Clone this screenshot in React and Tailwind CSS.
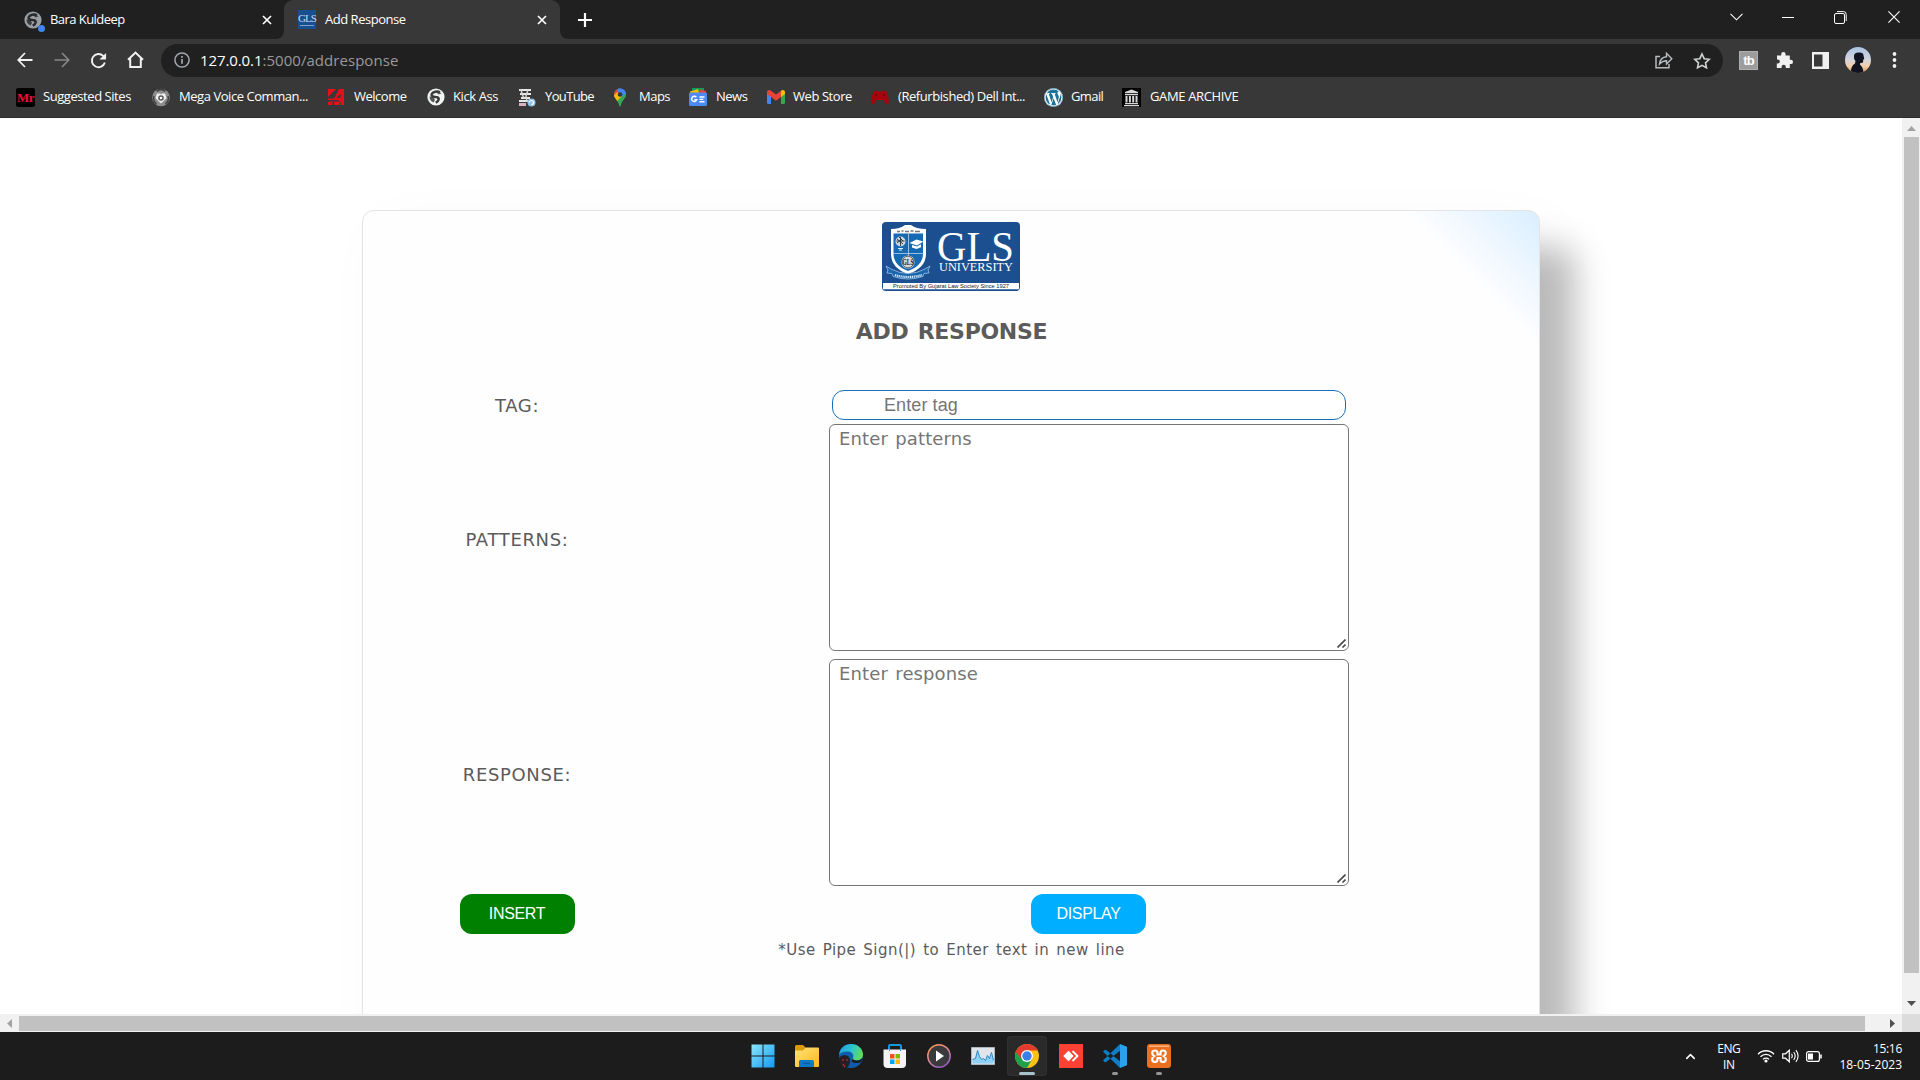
import { ChevronUp } from 'lucide-react'
import { FaWordpress } from 'react-icons/fa'

const Globe = ({ size = 18, land = '#3a3a3a', sea = '#f1f3f4' }) => (
  <svg width={size} height={size} viewBox="0 0 18 18">
    <circle cx="9" cy="9" r="8.600" fill={sea} />
    <path d="M12.800 4.200C10.500 2.600 5.500 3.800 4.600 6.400 4 9 8 8.600 10 9.200c2.600.8 2.200 3.300-1.200 5.600" fill="none" stroke={land} strokeWidth="2.500" />
    <path d="M2.500 8.500l4 .5 1.500 3-1.500 2.500C4 13.500 2.500 11.500 2.500 8.500z" fill={land} opacity=".85" />
    <path d="M9.500 4.500l2-1.500 3 2.500-3 1z" fill={land} opacity=".8" />
  </svg>
)

const MrIcon = () => (
  <span className="flex size-[19px] items-center justify-center rounded-xs bg-black font-['Liberation_Serif',serif] text-[13px] font-bold leading-none tracking-[-0.4px] text-[#f50a3c]">Mr</span>
)
const MegaIcon = () => (
  <svg width="18" height="19" viewBox="0 0 18 19">
    <circle cx="9" cy="9.500" r="8.800" fill="#8d8d8d" />
    <path d="M5 3.500C7 .9 11 .9 13 3.500M2 8c-1 3 0 6 2.500 8M16 8c1 3 0 6-2.500 8" fill="none" stroke="#3c3c3c" strokeWidth="1.400" />
    <path d="M5 5.500h3.200L9 6.500l.8-1H13l1.500 4.500L9 15.500 3.500 10z" fill="#f0f0f0" />
    <circle cx="9" cy="10" r="2.800" fill="#555" />
    <circle cx="9" cy="10" r="1.300" fill="#fff" />
  </svg>
)
const WelcomeIcon = () => (
  <svg width="18" height="18" viewBox="0 0 18 18">
    <path d="M1 1h8L1 9zM11.500 1H17v9h-3V5.500L7 10.500H1V12h10l6 5V11.500z" fill="#e50f1c" />
    <path d="M12 1h5v11H6.500z" fill="#e50f1c" />
    <path d="M1 14l4.500-1v4H1zM7 13.500h6V17H7zM14 13h3v4h-3z" fill="#e50f1c" />
    <path d="M13.500 5.500v4.500H9.500z" fill="#383838" />
  </svg>
)
const YouTubeIcon = () => (
  <svg width="18" height="19" viewBox="0 0 18 19">
    <path d="M1 2h12M2 6h11M3 10h9M1 13h10" stroke="#e9e9e9" strokeWidth="2.200" />
    <path d="M3 1l1 5 2 4M10 2L8 8l1 6" stroke="#d2d2d2" strokeWidth="1.500" fill="none" />
    <path d="M1 15h7v3H1z" fill="#d9b3bf" />
    <circle cx="13.500" cy="14.500" r="4" fill="#8fc1e8" />
    <path d="M11.500 14.500a2 2 0 1 1 2 2" stroke="#fff" strokeWidth="1.200" fill="none" />
  </svg>
)
const MapsIcon = () => (
  <svg width="14" height="19" viewBox="0 0 14 19">
    <defs><clipPath id="pin"><path d="M7 .5a6 6 0 0 1 6 6c0 4-4.200 5.500-5.200 11.300q-.8 1.200-1.600 0C5.200 12 1 10.500 1 6.500a6 6 0 0 1 6-6z" /></clipPath></defs>
    <g clipPath="url(#pin)">
      <path d="M0 0h14v19H0z" fill="#34a853" />
      <path d="M4 0h10v5L7 10z" fill="#4285f4" />
      <path d="M0 0h5l3 3-5 6H0z" fill="#ea4335" />
      <path d="M0 8l4.500-4L9 8l-6 6z" fill="#fbbc04" />
      <path d="M5 0h9v4l-5 2-4-2z" fill="#4285f4" />
    </g>
    <circle cx="7" cy="6.500" r="2.300" fill="#383838" />
  </svg>
)
const NewsIcon = () => (
  <svg width="18" height="18" viewBox="0 0 18 18">
    <path d="M3 0h12v5H3z" fill="#0f9d58" />
    <path d="M1 3.500L9 1l1 4H1z" fill="#fbbc04" />
    <path d="M11 1.500l6 1.500v3h-7z" fill="#ea4335" />
    <rect y="4.500" width="18" height="13.500" rx="1.300" fill="#4c8bf5" />
    <path d="M7.300 9.300A2.600 2.600 0 1 0 7.700 11.800H5.400M10.500 9h5M10.500 11.400h3.800M10.500 13.800h5" stroke="#fff" strokeWidth="1.400" fill="none" />
  </svg>
)
const GmailIcon = () => (
  <svg width="18" height="14" viewBox="0 0 18 14">
    <path d="M0 2v10.500Q0 14 1.500 14H4V5z" fill="#4285f4" />
    <path d="M18 2v10.500q0 1.500-1.500 1.500H14V5z" fill="#34a853" />
    <path d="M14 1.500V7l4-3V2.300C18 .2 15.600-.6 14 .8z" fill="#fbbc04" />
    <path d="M0 2.300C0 .2 2.400-.6 4 .8l5 3.800 5-3.800V7L9 10.700 0 4z" fill="#ea4335" />
  </svg>
)
const PadIcon = () => (
  <svg width="18" height="15" viewBox="0 0 18 15">
    <path d="M3 1.500Q5-.3 7 1.500h4Q13-.3 15 1.500c2 3 3 8 2.800 11-.5 3-3 2.500-5-2.500h-7.600C3.200 15 .7 15.500.2 12.500 0 9.500 1 4.500 3 1.500z" fill="#a5060d" />
    <path d="M4 5h2M5 4v2M12 5h2M13 4v2" stroke="#6f0308" strokeWidth="1" />
  </svg>
)
const WpIcon = () => (
  <span className="flex size-[19px] items-center justify-center rounded-full bg-white text-[#1f7196]"><FaWordpress size={19} /></span>
)
const ArchiveIcon = () => (
  <svg width="19" height="19" viewBox="0 0 19 19">
    <path d="M0 0h19v19H0z" fill="#000" />
    <path d="M9.500 1.500L16 4v1.200H3V4zM3 6h13v1.300H3zM3 15h13v1.200H3zM2 17h15v1.300H2zM3.500 8h2v6.500h-2zM6.900 8h2v6.500h-2zM10.200 8h2v6.500h-2zM13.500 8h2v6.500h-2z" fill="#d8d8d8" />
  </svg>
)

const bookmarks = [
  { w: 'w-[136px]', gap: 'gap-[8px]', t: 'tracking-[-0.44px]', label: 'Suggested Sites', icon: <MrIcon /> },
  { w: 'w-[175px]', gap: 'gap-[9px]', t: 'tracking-[-0.45px]', label: 'Mega Voice Comman...', icon: <MegaIcon /> },
  { w: 'w-[100px]', gap: 'gap-[9px]', t: 'tracking-[-0.5px]', label: 'Welcome', icon: <WelcomeIcon /> },
  { w: 'w-[91px]', gap: 'gap-[8px]', t: 'tracking-[-0.41px]', label: 'Kick Ass', icon: <Globe /> },
  { w: 'w-[95px]', gap: 'gap-[9px]', t: 'tracking-[-0.64px]', label: 'YouTube', icon: <YouTubeIcon /> },
  { w: 'w-[76px]', gap: 'gap-[12px]', t: 'tracking-[-0.5px]', label: 'Maps', icon: <MapsIcon /> },
  { w: 'w-[78px]', gap: 'gap-[9px]', t: 'tracking-[-0.5px]', label: 'News', icon: <NewsIcon /> },
  { w: 'w-[104px]', gap: 'gap-[8px]', t: 'tracking-[-0.43px]', label: 'Web Store', icon: <GmailIcon /> },
  { w: 'w-[173px]', gap: 'gap-[9px]', t: 'tracking-[-0.43px]', label: '(Refurbished) Dell Int...', icon: <PadIcon /> },
  { w: 'w-[78px]', gap: 'gap-[8px]', t: 'tracking-[-0.6px]', label: 'Gmail', icon: <WpIcon /> },
  { w: 'w-[130px]', gap: 'gap-[9px]', t: 'tracking-[-0.35px]', label: 'GAME ARCHIVE', icon: <ArchiveIcon /> },
]

const X = () => (
  <svg width="10" height="10" viewBox="0 0 10 10"><path d="M1 1l8 8M9 1L1 9" stroke="#fff" strokeWidth="1.700" /></svg>
)

function TabStrip() {
  return (
    <div className="flex h-[39px] items-stretch bg-[#202020]">
      <div className="flex w-[284px] items-center pl-[24px] pr-[12px]">
        <span className="relative h-[18px] w-[18px]">
          <Globe land="#2a2a2a" sea="#9aa0a6" />
          <span className="absolute left-[14px] top-[14px] size-[7px] rounded-full bg-[#3f85f5]" />
        </span>
        <span className="ml-[8px] flex-1 whitespace-nowrap text-[13px] tracking-[-0.55px] text-white">Bara Kuldeep</span>
        <X />
      </div>
      <div className="relative flex w-[276px] items-center rounded-t-[9px] bg-[#383838] pl-[14px] pr-[13px]">
        <svg className="absolute -left-[9px] bottom-0" width="9" height="9"><path d="M9 0v9H0Q9 9 9 0z" fill="#383838" /></svg>
        <svg className="absolute -right-[9px] bottom-0" width="9" height="9"><path d="M0 0v9h9Q0 9 0 0z" fill="#383838" /></svg>
        <span className="flex h-[19px] w-[18px] flex-col items-center justify-center bg-[#174f92] font-['Liberation_Serif',serif] leading-none text-[#c7d8ee]">
          <span className="text-[11px] leading-[10px] tracking-[-1px]">GLS</span>
          <span className="mt-[2px] h-px w-[14px] bg-[#7d9fca]" />
        </span>
        <span className="ml-[9px] flex-1 whitespace-nowrap text-[13px] tracking-[-0.48px] text-white">Add Response</span>
        <X />
      </div>
      <div className="flex items-center pl-[18px]">
        <svg width="14" height="14" viewBox="0 0 14 14"><path d="M7 0v14M0 7h14" stroke="#fff" strokeWidth="2.200" /></svg>
      </div>
      <div className="ml-auto flex items-center pb-[5px]">
        <svg className="mr-[39px]" width="13" height="8" viewBox="0 0 13 8"><path d="M.5.8l6 6 6-6" stroke="#fff" fill="none" strokeWidth="1.100" /></svg>
        <span className="mr-[40px] h-px w-[12px] bg-white" />
        <svg className="mr-[41px]" width="13" height="13" viewBox="0 0 13 13"><rect x=".5" y="2.500" width="10" height="10" rx="1.500" stroke="#fff" fill="none" /><path d="M3 .6h6.500q2.700 0 2.700 2.800V10" stroke="#fff" fill="none" /></svg>
        <svg className="mr-[20px]" width="12" height="12" viewBox="0 0 12 12"><path d="M.4.4l11.200 11.200M11.600.4L.4 11.600" stroke="#fff" strokeWidth="1.100" /></svg>
      </div>
    </div>
  )
}

function Toolbar() {
  return (
    <div className="flex h-[42px] items-center bg-[#383838] pl-[17px]">
      <svg className="mr-[21px]" width="16" height="16" viewBox="0 0 16 16"><path d="M15.500 8H1.500M8 1L1.300 8 8 15" stroke="#f1f1f1" strokeWidth="1.800" fill="none" /></svg>
      <svg className="mr-[20px]" width="16" height="16" viewBox="0 0 16 16"><path d="M.5 8h14M8 1l6.700 7L8 15" stroke="#868686" strokeWidth="1.700" fill="none" /></svg>
      <svg className="mr-[20px]" width="17" height="17" viewBox="0 0 18 18"><path d="M15.700 11A7 7 0 1 1 14 4.200l1.500 1.500" stroke="#f1f1f1" strokeWidth="2" fill="none" /><path d="M17 1v7h-7z" fill="#f1f1f1" /></svg>
      <svg className="mr-[17px]" width="17" height="18" viewBox="0 0 17 18"><path d="M1 8.800L8.500 1.600 16 8.800M3.200 7.500V16h10.600V7.500" stroke="#f1f1f1" strokeWidth="2" fill="none" /></svg>
      <div className="flex h-[33px] w-[1562px] items-center rounded-full bg-[#202020] pl-[13px] pr-[12px] text-[15px]">
        <svg className="mr-[10px]" width="16" height="16" viewBox="0 0 16 16"><circle cx="8" cy="8" r="7.100" stroke="#a5a9ad" strokeWidth="1.500" fill="none" /><path d="M8 7v4.800M8 4v1.700" stroke="#a5a9ad" strokeWidth="1.700" /></svg>
        <span className="tracking-[-0.1px] text-white">127.0.0.1</span>
        <span className="tracking-[0.05px] text-[#9a9a9a]">:5000/addresponse</span>
        <svg className="ml-auto mr-[20px]" width="18" height="17" viewBox="0 0 18 17"><path d="M5 4.500H1v11.300h13V12" stroke="#b9bbbd" strokeWidth="1.500" fill="none" /><path d="M4.500 12C5 7.500 7.500 5 11.500 4.700V1.300L16.800 6.700 11.500 12V8.700C8.500 8.700 6.500 9.700 4.500 12z" stroke="#b9bbbd" strokeWidth="1.400" fill="none" /></svg>
        <svg width="18" height="17" viewBox="0 0 18 17"><path d="M9 2l2.200 4.700 5 .6-3.700 3.500 1 5L9 13.300l-4.500 2.500 1-5L1.800 7.300l5-.6z" stroke="#d0d2d4" strokeWidth="1.600" fill="none" /></svg>
      </div>
      <span className="ml-[16px] flex size-[19px] items-center justify-center border border-[#b0b0b0] bg-[#9c9c9c] font-['Liberation_Sans',sans-serif] text-[13px] font-bold leading-none tracking-[-1px] text-white">tb</span>
      <svg className="ml-[18px]" width="17" height="18" viewBox="0 0 17 18"><path d="M1 4.500h4.200V3.300a2.200 2.200 0 0 1 4.400 0v1.200h4.200v4.200h1a2.200 2.200 0 0 1 0 4.400h-1V17H9.800v-1.200a2.100 2.100 0 0 0-4.200 0V17H.8v-4.400h1a2 2 0 0 0 0-4H1z" fill="#f1f1f1" /></svg>
      <svg className="ml-[19px]" width="17" height="17" viewBox="0 0 17 17"><path fillRule="evenodd" d="M0 0h17v17H0zM2 2.500v12h8.500v-12z" fill="#f1f1f1" /></svg>
      <svg className="ml-[16px]" width="26" height="26" viewBox="0 0 26 26">
        <defs>
          <linearGradient id="sky" x2="0" y2="1"><stop stopColor="#a9c4e6" /><stop offset=".5" stopColor="#d6d4dc" /><stop offset=".75" stopColor="#f4cfa6" /><stop offset="1" stopColor="#c68a5c" /></linearGradient>
          <clipPath id="av"><circle cx="13" cy="13" r="13" /></clipPath>
        </defs>
        <g clipPath="url(#av)"><path d="M0 0h26v26H0z" fill="url(#sky)" /><path d="M9 9q0-3.500 4.500-3.500Q18.500 5 18.500 8.500l.8 3.500-1 .6-.3 3-3 .6v1.500q3 2 3.500 8.300H6q-.5-7 4-9.500l.5-2.500Q8.500 12 9 9z" fill="#111420" /></g>
      </svg>
      <svg className="ml-[21px]" width="5" height="16" viewBox="0 0 5 16"><g fill="#f1f1f1"><circle cx="2.500" cy="2" r="1.900" /><circle cx="2.500" cy="8" r="1.900" /><circle cx="2.500" cy="14" r="1.900" /></g></svg>
    </div>
  )
}

function Bookmarks() {
  return (
    <div className="flex h-[37px] items-center border-b border-[#2b2b2b] bg-[#383838] pb-[4px] pl-[16px]">
      {bookmarks.map((b) => (
        <div key={b.label} className={`flex shrink-0 items-center whitespace-nowrap text-[13px] text-white ${b.w} ${b.gap} ${b.t}`}>
          {b.icon}
          <span>{b.label}</span>
        </div>
      ))}
    </div>
  )
}

const Logo = () => (
  <svg className="rounded-[4px]" width="138" height="69" viewBox="0 0 138 69">
    <path d="M0 0h138v69H0z" fill="#1b4f8f" />
    <path d="M1 61h136v6.300H1z" fill="#fff" />
    <path d="M9 7q9 0 14-4h6q5 4 15 4v25q0 14-18 20Q9 46 9 32z" fill="#fff" />
    <path d="M11.500 11.500h29.500v20q0 12-15 17.500-14.500-5.500-14.500-17.500z" fill="#1669b3" />
    <path d="M26.500 11.500V34M11 31.500h31" stroke="#b9d3ea" strokeWidth=".8" />
    <path d="M15 9.500h3M19.500 9h2M23 9.500h4M28.500 9h3M33 9.500h5" stroke="#777" strokeWidth="1.600" />
    <circle cx="18.500" cy="19.500" r="5" fill="#cfd8de" />
    <path d="M15 17l6 5M15 21l5-4M17 15l4 4M14.500 19h8M18.500 15v9" stroke="#26333d" strokeWidth=".9" />
    <path d="M16 26.500h5M17 28h3" stroke="#dfe9f2" />
    <path d="M27.500 21l7-3.500 7 2-6.500 4zM30 23l5 1.500 4-2.200v3l-4.500 1.700-4.500-1.500z" fill="#fff" />
    <circle cx="26" cy="40" r="6.600" fill="#d7d9da" />
    <circle cx="26" cy="40" r="5.800" fill="none" stroke="#565b60" strokeWidth=".9" />
    <text x="26" y="42.800" textAnchor="middle" fontSize="8" fontWeight="700" textLength="11" lengthAdjust="spacingAndGlyphs" fontFamily="Liberation Serif, serif" fill="#24292e">GLS</text>
    <path d="M4 44l5 3q17 9 34 0l5-3-2 4 1 3-5 .5-1 3q-15 5-30 0l-1-3-5-.5 1-3z" fill="#1a66ad" stroke="#9dc3e6" strokeWidth=".8" />
    <path d="M13 53q13 4 27 0" fill="none" stroke="#dcecfa" strokeWidth="2.200" strokeDasharray="1.200 .7" />
    <text x="55" y="39" fontSize="42" textLength="77" lengthAdjust="spacingAndGlyphs" fontFamily="Liberation Serif, serif" fill="#fff">GLS</text>
    <text x="57" y="49.200" fontSize="12.500" textLength="74" lengthAdjust="spacingAndGlyphs" fontFamily="Liberation Serif, serif" fill="#fff">UNIVERSITY</text>
    <text x="11" y="66" fontSize="5.600" textLength="116" lengthAdjust="spacingAndGlyphs" fontFamily="Liberation Sans, sans-serif" fill="#222">Promoted By Gujarat Law Society Since 1927</text>
  </svg>
)

const label = "text-center text-[18px] leading-[24px] tracking-[0.65px] text-[#5b5b5b] font-['DejaVu_Sans',sans-serif]"
const button = "h-[40px] w-[115px] rounded-[12px] text-[16px] tracking-[-0.35px] text-white font-['Liberation_Sans',sans-serif]"

function Area({ placeholder }) {
  return (
    <div className="relative">
      <textarea
        className="block h-[227px] w-[520px] resize-none rounded-[6px] border border-[#767676] bg-white px-[9px] py-[1px] font-['DejaVu_Sans',sans-serif] text-[18px] leading-[25px] tracking-[0.12px] [word-spacing:1.5px] placeholder:text-[#757575]"
        placeholder={placeholder}
      />
      <svg className="absolute bottom-[3px] right-[3px]" width="9" height="9" viewBox="0 0 9 9"><path d="M.5 8.500l8-8M5.500 8.500l3-3" stroke="#4a4a4a" strokeWidth="1.600" /></svg>
    </div>
  )
}

function Page() {
  return (
    <div className="min-w-0 flex-1 overflow-hidden bg-white pl-[362px] pt-[92px]">
      <div className="flex h-[900px] w-[1178px] flex-col items-center rounded-[12px] border border-[#e4e4e4] bg-[#fefefe] bg-[linear-gradient(225deg,#daeefe_0px,#e6f4ff_35px,#f4f9ff_68px,#fefefe_97px)] pt-[11px] shadow-[35px_38px_34px_rgba(0,0,0,0.26),14px_14px_60px_rgba(0,0,0,0.03)]">
        <Logo />
        <h1 className="mt-[26px] whitespace-nowrap pl-px font-['DejaVu_Sans',sans-serif] text-[22px] font-bold leading-[30px] tracking-[-0.3px] text-[#5b5b5b] [word-spacing:2px]">ADD RESPONSE</h1>
        <div className="mt-[43px] grid w-full grid-cols-[308px_520px] items-center gap-x-[158px]">
          <div className={`pt-[2px] ${label}`}>TAG:</div>
          <div className="flex h-[30px] justify-center">
            <input className="h-[30px] w-[514px] rounded-[12px] border border-[#1a70b8] bg-white pl-[51px] font-['Liberation_Sans',sans-serif] text-[18px] tracking-[0.1px] placeholder:text-[#757575]" placeholder="Enter tag" />
          </div>
          <div className={`mt-[4px] pt-[4px] ${label}`}>PATTERNS:</div>
          <div className="mt-[4px]"><Area placeholder="Enter patterns" /></div>
          <div className={`mt-[8px] pt-[4px] ${label}`}>RESPONSE:</div>
          <div className="mt-[8px]"><Area placeholder="Enter response" /></div>
          <div className="mt-[8px] flex justify-center"><button className={`bg-[#008000] ${button}`}>INSERT</button></div>
          <div className="mt-[8px] flex justify-center pr-px"><button className={`bg-[#00aeff] ${button}`}>DISPLAY</button></div>
        </div>
        <p className="mt-[6px] whitespace-nowrap pl-px font-['DejaVu_Sans',sans-serif] text-[15px] leading-[20px] tracking-[0.46px] text-[#5b5b5b] [word-spacing:1.900px]">*Use Pipe Sign(|) to Enter text in new line</p>
      </div>
    </div>
  )
}

function VBar() {
  return (
    <div className="flex w-[18px] flex-col items-center bg-[#f1f1f1] pl-[2px] pr-px">
      <svg className="mt-[8px]" width="9" height="5"><path d="M0 5L4.500 0 9 5z" fill="#a3a3a3" /></svg>
      <div className="mt-[6px] h-[836px] w-full bg-[#c1c1c1]" />
      <svg className="mt-auto mb-[8px]" width="9" height="5"><path d="M0 0l4.500 5L9 0z" fill="#505050" /></svg>
    </div>
  )
}

function HBar() {
  return (
    <div className="flex h-[18px] bg-[#f1f1f1]">
      <div className="flex w-[1902px] items-center">
        <svg className="ml-[7px] mr-[7px]" width="5" height="9"><path d="M5 0L0 4.500 5 9z" fill="#a3a3a3" /></svg>
        <div className="mt-px h-[15px] w-[1846px] bg-[#c1c1c1]" />
        <svg className="ml-auto mr-[7px]" width="5" height="9"><path d="M0 0l5 4.500L0 9z" fill="#505050" /></svg>
      </div>
      <div className="w-[18px] bg-[#dcdcdc]" />
    </div>
  )
}

const apps = [
  { icon: (
    <svg width="24" height="24" viewBox="0 0 24 24"><defs><linearGradient id="win" x2="1" y2="1" gradientUnits="userSpaceOnUse" gradientTransform="scale(24)"><stop stopColor="#8ee8fb" /><stop offset="1" stopColor="#0e97f5" /></linearGradient></defs><path d="M.5.500h11v11H.5zM12.500.5h11v11h-11zM.5 12.500h11v11H.5zM12.500 12.500h11v11h-11z" fill="url(#win)" /></svg>
  ) },
  { icon: (
    <svg width="24" height="24" viewBox="0 0 24 24"><defs><linearGradient id="fold" x2="1" y2="1"><stop stopColor="#ffe27a" /><stop offset="1" stopColor="#fbb91c" /></linearGradient></defs><path d="M0 2.500Q0 1 1.500 1H8l2.500 2.500L8 8H0z" fill="#dd9a06" /><path d="M0 6.500h8l2.500-3H23q1 0 1 1V22q0 1-1 1H1q-1 0-1-1z" fill="url(#fold)" /><path d="M4 23v-5.500Q4 16 5.500 16h12q1.500 0 1.500 1.500V23z" fill="#0f78c8" /><path d="M8 19.500h7" stroke="#0a5a9e" strokeWidth="1.300" /></svg>
  ) },
  { icon: (
    <svg width="24" height="24" viewBox="0 0 24 24"><defs><linearGradient id="edge" x1="0" y1=".2" x2="1" y2=".5"><stop stopColor="#1f9fe0" /><stop offset=".5" stopColor="#2cc3d2" /><stop offset="1" stopColor="#62dd58" /></linearGradient></defs><circle cx="12" cy="12" r="12" fill="#0e5cad" /><path d="M0 10.500C1 4 6 0 12 0c7 0 12 5 12 10.500 0 4-3.500 6-7 6-2.500 0-4-1-3.500-2 2-2.500.5-6.500-4-7C5.500 7.200 2 8.500 0 10.500z" fill="url(#edge)" /><path d="M14 14.500c0 1.200 1.500 2 3.500 2 2 0 4.500-.5 6-2.500L22 18c-3 1.500-8 1.500-9.500-1z" fill="#1c1c1c" /><path d="M0 14l2-2 4-1 3 1 2 3v4l-2 4-4 1-4-4z" fill="#2a1d24" /><path d="M3 16h2M7 16h2M4 20l2 3" stroke="#c43a33" strokeWidth="1.100" /></svg>
  ) },
  { icon: (
    <svg width="24" height="24" viewBox="0 0 24 24"><path d="M6 8V2q0-1 1-1h10q1 0 1 1v6" stroke="#1798dd" strokeWidth="2" fill="none" /><path d="M.5 5.500h22.500V20q0 4-4 4H4.500q-4 0-4-4z" fill="#f4f4f4" /><path d="M6 5.500h1V7H6zM17 5.500h1V7h-1z" fill="#1798dd" /><path d="M7 10h4.500v4.500H7z" fill="#f25022" /><path d="M12.500 10H17v4.500h-4.500z" fill="#7fba00" /><path d="M7 15.500h4.500V20H7z" fill="#00a4ef" /><path d="M12.500 15.500H17V20h-4.500z" fill="#ffb900" /></svg>
  ) },
  { icon: (
    <svg width="24" height="24" viewBox="0 0 24 24"><defs><linearGradient id="med" x2=".6" y2="1"><stop stopColor="#ff9a3c" /><stop offset=".5" stopColor="#e08a90" /><stop offset="1" stopColor="#9a5fc4" /></linearGradient></defs><circle cx="12" cy="12" r="11.200" fill="#3a3a3c" stroke="url(#med)" strokeWidth="1.500" /><path d="M9 6.500l8 5.500-8 5.500z" fill="#fff" /></svg>
  ) },
  { icon: (
    <svg width="24" height="24" viewBox="0 0 24 24"><path d="M.5 3.500h23v17H.5z" fill="#dfe5ea" stroke="#aab4bc" /><path d="M1.500 19.500v-4l3-1 2-8 2 6 2 3 2-1 2 2 2-5 2 3 2-4 2 5v4z" fill="#8fd0f7" /><path d="M1.500 15.500l3-1 2-8 2 6 2 3 2-1 2 2 2-5 2 3 2-6 2 8" stroke="#2389cf" fill="none" /></svg>
  ) },
  { active: true, icon: (
    <svg width="24" height="24" viewBox="0 0 24 24"><defs><clipPath id="chr"><circle cx="12" cy="12" r="12" /></clipPath></defs><g clipPath="url(#chr)"><path d="M0 0h24v24H0z" fill="#fbc116" /><path d="M12 12L1.600 6-3 12v12h15l5.200-9z" fill="#1ea04c" /><path d="M-1 6.500L1.600-1H24v7.500H12L6.800 15z" fill="#e33b2e" /></g><circle cx="12" cy="12" r="6" fill="#fff" /><circle cx="12" cy="12" r="4.700" fill="#3b7de9" /></svg>
  ) },
  { icon: (
    <svg width="24" height="24" viewBox="0 0 24 24"><path d="M0 0h24v24H0z" fill="#fb4134" /><path d="M9.500 6.800l5.200 5.200-5.200 5.200L4.300 12z" fill="#fff" /><path d="M13.500 7l5 5-5 5" stroke="#fff" strokeWidth="1.800" fill="none" /></svg>
  ) },
  { dot: true, icon: (
    <svg width="24" height="24" viewBox="0 0 24 24"><path d="M17 7L2.500 18.500 0 16.500 17 0zM17 17L2.500 5.500 0 7.500 17 24z" fill="#0f7ec6" /><path d="M17 0l7 2.800v18.400L17 24z" fill="#27a3f0" /><path d="M17 7v10l-6.300-5z" fill="#1c1c1c" /></svg>
  ) },
  { dot: true, icon: (
    <svg width="24" height="24" viewBox="0 0 24 24"><rect width="24" height="24" rx="3" fill="#ea6f1e" /><path d="M2 1.500h20v1.500H2z" fill="#f8b57f" /><path d="M8 6.500c2 0 2.500 1 2.500 2.500v1.500h3V9c0-1.500.5-2.500 2.500-2.500 3.500 0 3.500 4 1 5.500 2.500 1.500 2.500 6-1 6-2 0-2.500-1-2.500-2.500V14h-3v1.500c0 1.500-.5 2.500-2.500 2.500-3.500 0-3.500-4.500-1-6-2.500-1.500-2.500-5.500 1-5.500z" fill="none" stroke="#fff" strokeWidth="2.200" /></svg>
  ) },
]

function Taskbar() {
  return (
    <div className="flex h-[48px] items-center justify-between bg-[#1c1c1c]">
      <div className="flex gap-[4px] pl-[743px]">
        {apps.map((a, i) => (
          <div key={i} className={`relative flex size-[40px] items-center justify-center rounded-[4px] ${a.active ? 'bg-[#2a2a2a] ring-1 ring-inset ring-[#313131]' : ''}`}>
            {a.icon}
            {a.active && <span className="absolute bottom-px left-[12px] h-[3px] w-[16px] rounded-full bg-[#a9c3cd]" />}
            {a.dot && <span className="absolute bottom-px left-[17px] h-[3px] w-[6px] rounded-full bg-[#959595]" />}
          </div>
        ))}
      </div>
      <div className="flex items-center text-[12px] leading-[16px] text-white">
        <ChevronUp className="mr-[19px]" size={15} strokeWidth={2.500} />
        <div className="mr-[17px] pt-px text-center tracking-[-0.4px]"><div>ENG</div><div>IN</div></div>
        <svg className="mr-[7px]" width="18" height="14" viewBox="0 0 18 14"><path d="M1 5.200a11 11 0 0 1 16 0M3.500 7.800a7.600 7.600 0 0 1 11 0M6 10.400a4.200 4.200 0 0 1 6 0" stroke="#fff" strokeWidth="1.300" fill="none" /><circle cx="9" cy="12" r="1.600" fill="#fff" /></svg>
        <svg className="mr-[7px]" width="17" height="14" viewBox="0 0 17 14"><path d="M.7 4.800h2.800L7.300 1.200v11.600L3.500 9.200H.7z" stroke="#fff" strokeWidth="1.200" fill="none" /><path d="M9.500 4.800q1.500 2.200 0 4.400M11.700 3q3 4 0 8M13.900 1.200q4.400 5.800 0 11.600" stroke="#fff" strokeWidth="1.100" fill="none" /></svg>
        <svg className="mr-[17px]" width="16" height="11" viewBox="0 0 16 11"><rect x=".6" y=".6" width="12.800" height="9.800" rx="2" stroke="#fff" strokeWidth="1.200" fill="none" /><path d="M2 2.500h5v6H2z" fill="#fff" /><path d="M15 3.500v4" stroke="#fff" strokeWidth="1.600" /></svg>
        <div className="mr-[18px] pt-px text-right"><div className="tracking-[-0.3px]">15:16</div><div>18-05-2023</div></div>
      </div>
    </div>
  )
}

export default function App() {
  return (
    <div className="flex h-[1080px] w-[1920px] flex-col overflow-hidden font-['Open_Sans','Noto_Sans',sans-serif]">
      <TabStrip />
      <Toolbar />
      <Bookmarks />
      <div className="flex h-[896px]">
        <Page />
        <VBar />
      </div>
      <HBar />
      <Taskbar />
    </div>
  )
}
